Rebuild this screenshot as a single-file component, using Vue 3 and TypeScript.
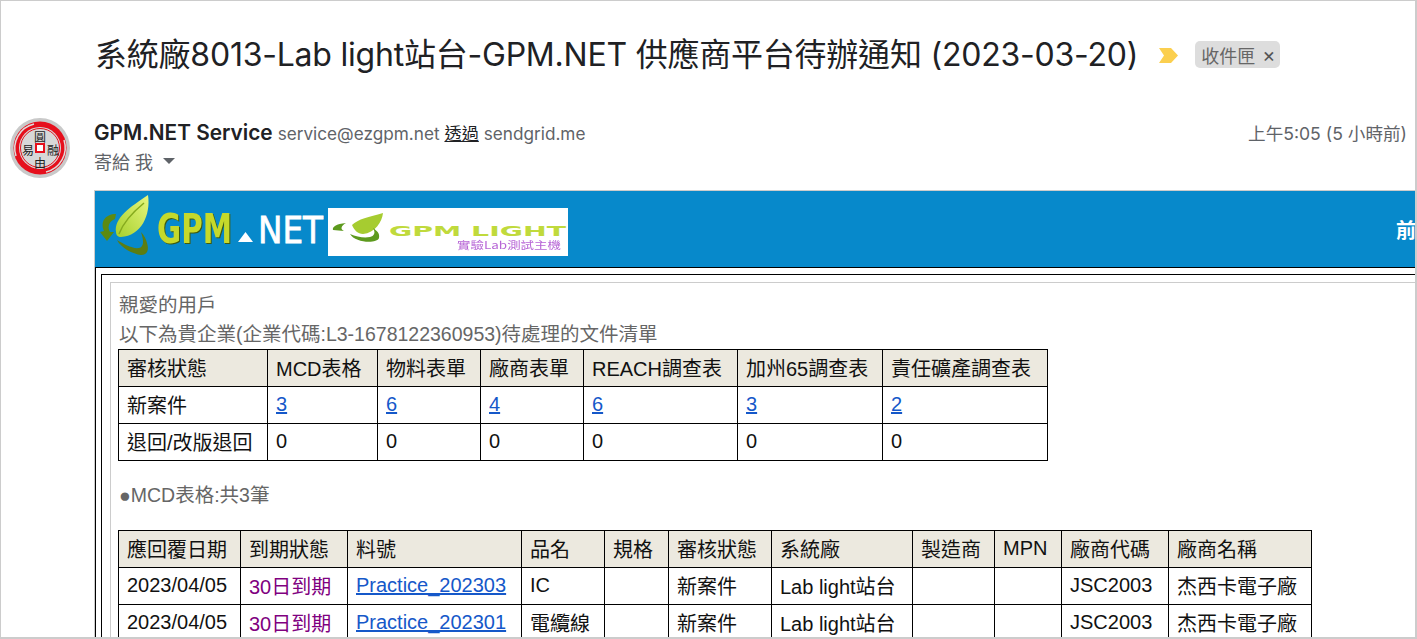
<template>
  <div class="page">
    <div class="subject">
      <h1 class="subject-text">系統廠8013-Lab light站台-GPM.NET 供應商平台待辦通知 (2023-03-20)</h1>
      <svg class="marker" width="20" height="15" viewBox="0 0 20 15"><path d="M0 0h12l7 7.5-7 7.5H0l5-7.5z" fill="#fbcf4f" /></svg>
      <span class="chip">收件匣<span class="chip-close">×</span></span>
    </div>

    <div class="message">
      <svg class="avatar" width="60" height="60" viewBox="0 0 60 60">
        <circle cx="30" cy="30" r="30" fill="#c9c9c9" />
        <circle cx="30" cy="30" r="26.5" fill="#e60f1c" />
        <path d="M6 38A25 25 0 0 1 24 6" fill="none" stroke="#ddd" stroke-width="1.5" />
        <path d="M54 22A25 25 0 0 1 36 54" fill="none" stroke="#ddd" stroke-width="1.5" />
        <circle cx="30" cy="30" r="21" fill="#d8d8d8" />
        <circle cx="30" cy="30" r="19.5" fill="none" stroke="#e60f1c" stroke-width="1" />
        <rect x="26" y="26" width="8" height="8" fill="#fff" stroke="#e60f1c" stroke-width="2" />
        <text x="30" y="23.5" class="seal">圓</text>
        <text x="30" y="49.5" class="seal">由</text>
        <text x="18" y="36.5" class="seal">易</text>
        <text x="43" y="36.5" class="seal">融</text>
      </svg>

      <div class="message-main">
        <div class="sender-row">
          <div>
            <strong class="sender-name">GPM.NET Service</strong>
            <span class="sender-mail">service@ezgpm.net <u class="via">透過</u> sendgrid.me</span>
          </div>
          <span class="time">上午5:05 (5 小時前)</span>
        </div>
        <div class="to-row">
          寄給 我
          <svg width="12" height="6" viewBox="0 0 12 6"><path d="M0 0h12L6 6z" fill="#5f6368" /></svg>
        </div>

        <div class="mail">
          <div class="mail-head">
            <svg class="gpm-logo" width="225" height="70" viewBox="0 0 225 70">
              <defs>
                <linearGradient id="leafFill" x1="0" y1="1" x2="1" y2="0">
                  <stop offset="0" stop-color="#a5cf2c" />
                  <stop offset="1" stop-color="#e7f77e" />
                </linearGradient>
              </defs>
              <path d="M17 38C15 24 31 13 49 1c3 20-7 41-27 42-3 0-5-2-5-5z" fill="url(#leafFill)" />
              <path d="M20 40C24 29 34 18 45 9" fill="none" stroke="#86aa1e" stroke-width="1.5" />
              <path d="M17 20C6 20 1 28 5 37l-4 1 7 9 7-9-4 0c-3-5-1-11 5-13z" fill="#5c8a12" />
              <path d="M18 46c4 8 16 14 24 15 7 0 8-6 6-12-1-4-3-8-6-11 3 9 3 15-2 16-7 1-15-4-22-8z" fill="#5c7d12" />
              <text x="58" y="49" class="logo-gpm" textLength="75" lengthAdjust="spacingAndGlyphs">GPM</text>
              <path d="M139 48l7.500-10 7.500 10z" fill="#fff" />
              <text x="159" y="49" class="logo-net" textLength="65" lengthAdjust="spacingAndGlyphs">NET</text>
            </svg>
            <svg class="light-logo" width="240" height="48" viewBox="0 0 240 48">
              <rect width="240" height="48" fill="#fff" />
              <path d="M24 17c6-6 17-8 31-12-1 9-8 20-20 21-5 0-9-4-11-9z" fill="#a6cc30" />
              <path d="M18 15C8 16 4 19 5 22l11 1c-4-2-3-5 2-8zM22 26c5 9 27 10 29 4 1-5-2-7-6-10 3 5 1 8-3 9-6 1-13 0-20-3z" fill="#5d9a1e" />
              <text x="61" y="28" class="logo-light" textLength="177" lengthAdjust="spacingAndGlyphs">GPM LIGHT</text>
              <text x="129" y="41" class="logo-sub" textLength="104" lengthAdjust="spacingAndGlyphs">實驗Lab測試主機</text>
            </svg>
            <span class="head-link">前</span>
          </div>

          <div class="frame-outer">
            <div class="frame-inner">
              <div class="content">
                <p class="note">親愛的用戶</p>
                <p class="note intro">以下為貴企業(企業代碼:L3-1678122360953)待處理的文件清單</p>
                <table class="grid">
                  <colgroup>
                    <col v-for="w in summaryWidths" :key="w" :style="{ width: w + 'px' }" />
                  </colgroup>
                  <tbody>
                    <tr><th v-for="h in summaryHead" :key="h">{{ h }}</th></tr>
                    <tr>
                      <td>新案件</td>
                      <td v-for="(n, i) in newCases" :key="i"><a href="#">{{ n }}</a></td>
                    </tr>
                    <tr>
                      <td>退回/改版退回</td>
                      <td v-for="i in 6" :key="i">0</td>
                    </tr>
                  </tbody>
                </table>

                <p class="note section-title">●MCD表格:共3筆</p>
                <table class="grid">
                  <colgroup>
                    <col v-for="(w, i) in mcdWidths" :key="i" :style="{ width: w + 'px' }" />
                  </colgroup>
                  <tbody>
                    <tr><th v-for="h in mcdHead" :key="h">{{ h }}</th></tr>
                    <tr v-for="row in mcdRows" :key="row.part">
                      <td>2023/04/05</td>
                      <td class="due">30日到期</td>
                      <td><a href="#">{{ row.part }}</a></td>
                      <td>{{ row.name }}</td>
                      <td></td>
                      <td>新案件</td>
                      <td>Lab light站台</td>
                      <td></td>
                      <td></td>
                      <td>JSC2003</td>
                      <td>杰西卡電子廠</td>
                    </tr>
                  </tbody>
                </table>
              </div>
            </div>
          </div>
        </div>
      </div>
    </div>
  </div>
</template>

<script setup lang="ts">
const summaryHead = ['審核狀態', 'MCD表格', '物料表單', '廠商表單', 'REACH調查表', '加州65調查表', '責任礦產調查表']
const summaryWidths = [149, 110, 103, 103, 154, 145, 165]
const newCases = [3, 6, 4, 6, 3, 2]

const mcdHead = ['應回覆日期', '到期狀態', '料號', '品名', '規格', '審核狀態', '系統廠', '製造商', 'MPN', '廠商代碼', '廠商名稱']
const mcdWidths = [122, 107, 174, 83, 64, 103, 141, 82, 67, 107, 143]
const mcdRows = [
  { part: 'Practice_202303', name: 'IC' },
  { part: 'Practice_202301', name: '電纜線' }
]
</script>

<style>
html, body { margin: 0; height: 100%; overflow: hidden; background: #fff; }
</style>

<style scoped>
.page {
  box-sizing: border-box;
  height: 639px;
  border: 1px solid #ccc;
  border-right-width: 2px;
  border-bottom-width: 2px;
  overflow: hidden;
  background: #fff;
  font-family: Inter, "Noto Sans CJK TC", sans-serif;
}
.subject {
  display: flex;
  align-items: center;
  height: 108px;
  padding-left: 94px;
}
.subject-text {
  margin: 0 0 6px;
  font-size: 32px;
  font-weight: 400;
  letter-spacing: -0.22px;
  color: #202124;
  white-space: nowrap;
}
.marker { margin-left: 21px; }
.chip {
  display: flex;
  align-items: center;
  box-sizing: border-box;
  height: 27px;
  margin: 0 0 1px 16px;
  padding: 0 5px 0 6px;
  border-radius: 5px;
  background: #ddd;
  color: #666;
  font-size: 18px;
}
.chip-close { margin-left: 7px; font-size: 20px; color: #555; }
.message {
  display: flex;
  align-items: flex-start;
  padding: 9px 0 0 9px;
}
.avatar { flex: none; margin-right: 24px; }
.seal {
  font-size: 12px;
  fill: #222;
  text-anchor: middle;
}
.message-main { flex: 1; min-width: 0; }
.sender-row {
  display: flex;
  justify-content: space-between;
  align-items: center;
  height: 28px;
  padding-right: 8px;
}
.sender-name { font-size: 20.8px; font-weight: 600; color: #202124; }
.sender-mail { margin-left: 5px; font-size: 17.2px; color: #5f6368; }
.via { color: #202124; }
.time { font-size: 17.6px; color: #5f6368; }
.to-row {
  display: flex;
  align-items: center;
  gap: 10px;
  height: 30px;
  font-size: 18px;
  color: #5f6368;
}
.mail {
  margin-top: 14px;
  overflow: hidden;
  border-left: 1px solid #ccc;
  border-top: 1px solid #ccc;
}
.mail-head {
  display: flex;
  align-items: center;
  box-sizing: border-box;
  height: 76px;
  padding-left: 4px;
  background: #0789cb;
}
.gpm-logo { flex: none; margin-right: 4px; }
.light-logo { flex: none; margin-top: 5px; }
.logo-gpm {
  font-family: "DejaVu Sans", sans-serif;
  font-size: 40px;
  font-weight: 700;
  fill: #c5d92b;
  filter: drop-shadow(1px 1px 0 #3d5a10);
}
.logo-net {
  font-family: "DejaVu Sans", sans-serif;
  font-size: 38px;
  fill: #fff;
  stroke: #fff;
  stroke-width: 0.8;
}
.logo-light {
  font-family: "DejaVu Sans", sans-serif;
  font-size: 14px;
  font-weight: 700;
  fill: #c0da3c;
}
.logo-sub {
  font-family: "Noto Sans CJK TC", sans-serif;
  font-size: 10px;
  fill: #b765d6;
  filter: blur(0.4px);
}
.head-link {
  margin-left: auto;
  margin-right: -1px;
  font-size: 20px;
  font-weight: 700;
  color: #fff;
  white-space: nowrap;
}
.frame-outer {
  width: 1500px;
  border: 1px solid #000;
  border-bottom: 0;
  padding: 6px 5px 0;
}
.frame-inner {
  border: 1px solid #000;
  border-bottom: 0;
  padding: 7px 8px 0;
}
.content {
  border: 1px solid #ccc;
  padding: 7px 7px 0;
}
.note {
  margin: 0;
  height: 30px;
  padding-left: 1px;
  line-height: 30px;
  font-family: "Liberation Sans", "Noto Sans CJK TC", sans-serif;
  font-size: 19.5px;
  color: #666;
  white-space: nowrap;
}
.intro { margin-bottom: -1px; line-height: 28px; }
.section-title { margin: 19px 0 20px; }
.grid {
  table-layout: fixed;
  border-collapse: collapse;
  font-family: "Liberation Sans", "Noto Sans CJK TC", sans-serif;
  font-size: 20px;
  color: #111;
}
.grid th,
.grid td {
  height: 37px;
  box-sizing: border-box;
  padding: 0 9px 2px 8px;
  border: 1px solid #000;
  text-align: left;
  font-weight: 400;
  white-space: nowrap;
}
.grid th { background: #ece9df; }
.grid a { color: #1558c9; }
.due { color: #800080; }
</style>
